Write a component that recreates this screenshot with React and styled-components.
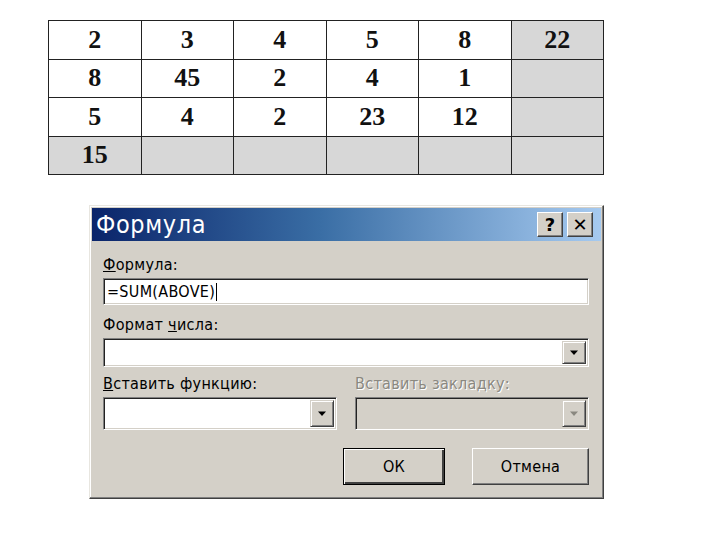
import React from "react";
import styled, { createGlobalStyle } from "styled-components";

const Global = createGlobalStyle`
  html, body { margin: 0; padding: 0; background: #fff; }
  body { width: 720px; height: 540px; overflow: hidden; }
`;

const Page = styled.div`
  display: flex;
  flex-direction: column;
  padding: 20px 0 0 48px;
`;

const Table = styled.table`
  border-collapse: collapse;
  width: 556px;
  table-layout: fixed;
  font-family: "Liberation Serif", serif;
  font-weight: bold;
  font-size: 26px;
  color: #111;
`;

const Cell = styled.td`
  border: 1px solid #222;
  height: 37.5px;
  padding: 0;
  text-align: center;
  vertical-align: middle;
  background: ${(p) => (p.$grey ? "#d7d7d7" : "#fff")};
  line-height: 1;
`;

const Dialog = styled.div`
  margin: 30px 0 0 41px;
  width: 515px;
  height: 294px;
  box-sizing: border-box;
  background: #d4d0c8;
  border: 1px solid #404040;
  border-top-color: #e8e6e0;
  border-left-color: #e8e6e0;
  box-shadow: inset -1px -1px 0 #808080, inset 1px 1px 0 #fff;
  padding: 2px;
  display: flex;
  flex-direction: column;
  font-family: "DejaVu Sans Condensed", "DejaVu Sans", sans-serif;
`;

const TitleBar = styled.div`
  height: 33px;
  background: linear-gradient(90deg, #0a246a 0%, #3a6ea5 45%, #a6caf0 100%);
  display: flex;
  align-items: center;
  padding: 0 8px 0 4px;
`;

const Title = styled.div`
  flex: 1;
  color: #fff;
  font-size: 25px;
  letter-spacing: 0.6px;
`;

const CapButton = styled.div`
  width: 26px;
  height: 25px;
  margin-left: 4px;
  box-sizing: border-box;
  background: #d4d0c8;
  border: 1px solid;
  border-color: #fff #404040 #404040 #fff;
  box-shadow: inset -1px -1px 0 #808080;
  display: flex;
  align-items: center;
  justify-content: center;
  font-family: "DejaVu Sans", sans-serif;
  font-weight: bold;
  font-size: 18px;
  color: #000;
`;

const Body = styled.div`
  flex: 1;
  display: flex;
  flex-direction: column;
  padding: 15px 12px 0 11px;
`;

const Label = styled.div`
  font-size: 16px;
  letter-spacing: 0.3px;
  color: ${(p) => (p.$disabled ? "#8a8880" : "#000")};
  height: 18px;
  line-height: 18px;
  margin-top: ${(p) => p.$mt || 0}px;
  text-shadow: ${(p) => (p.$disabled ? "1px 1px 0 #fff" : "none")};
  u { text-decoration: underline; }
`;

const Field = styled.div`
  height: ${(p) => p.$h || 27}px;
  box-sizing: border-box;
  margin-top: 4px;
  background: ${(p) => (p.$disabled ? "#d4d0c8" : "#fff")};
  border: 1px solid;
  border-color: #808080 #fff #fff #808080;
  box-shadow: inset 1px 1px 0 #222, inset -1px -1px 0 #d4d0c8;
  display: flex;
  align-items: stretch;
  font-size: 16px;
  letter-spacing: 0.3px;
  color: #000;
  padding: 2px;
`;

const FieldText = styled.div`
  flex: 1;
  display: flex;
  align-items: center;
  padding-left: 1px;
`;

const Caret = styled.span`
  display: inline-block;
  width: 1px;
  height: 18px;
  background: #000;
  margin-left: 1px;
`;

const DropBtn = styled.div`
  width: 24px;
  box-sizing: border-box;
  background: #d4d0c8;
  border: 1px solid;
  border-color: #d4d0c8 #404040 #404040 #d4d0c8;
  box-shadow: inset 1px 1px 0 #fff, inset -1px -1px 0 #808080;
  display: flex;
  align-items: center;
  justify-content: center;
`;

const Row = styled.div`
  display: flex;
  gap: 18px;
`;

const Col = styled.div`
  flex: ${(p) => p.$flex || 1};
  display: flex;
  flex-direction: column;
`;

const ButtonRow = styled.div`
  display: flex;
  justify-content: flex-end;
  gap: 27px;
  margin-top: 18px;
`;

const Button = styled.div`
  width: ${(p) => p.$w}px;
  height: 37px;
  box-sizing: border-box;
  background: #d4d0c8;
  border: 1px solid;
  border-color: ${(p) => (p.$default ? "#000" : "#fff #404040 #404040 #fff")};
  box-shadow: ${(p) =>
    p.$default
      ? "inset 1px 1px 0 #fff, inset -2px -2px 0 #404040"
      : "inset -1px -1px 0 #808080"};
  display: flex;
  align-items: center;
  justify-content: center;
  font-size: 16px;
  letter-spacing: 0.3px;
  color: #000;
`;

function Arrow({ disabled }) {
  return (
    <svg width="10" height="6" viewBox="0 0 10 6">
      <path d="M1 0.5 H9 L5 5 Z" fill={disabled ? "#8a8880" : "#000"} />
    </svg>
  );
}

const rows = [
  [["2"], ["3"], ["4"], ["5"], ["8"], ["22", true]],
  [["8"], ["45"], ["2"], ["4"], ["1"], ["", true]],
  [["5"], ["4"], ["2"], ["23"], ["12"], ["", true]],
  [["15", true], ["", true], ["", true], ["", true], ["", true], ["", true]],
];

export default function App() {
  return (
    <>
      <Global />
      <Page>
        <Table>
          <tbody>
            {rows.map((r, i) => (
              <tr key={i}>
                {r.map(([v, g], j) => (
                  <Cell key={j} $grey={g}>
                    {v}
                  </Cell>
                ))}
              </tr>
            ))}
          </tbody>
        </Table>

        <Dialog>
          <TitleBar>
            <Title>Формула</Title>
            <CapButton>?</CapButton>
            <CapButton>✕</CapButton>
          </TitleBar>
          <Body>
            <Label>
              <u>Ф</u>ормула:
            </Label>
            <Field>
              <FieldText>
                =SUM(ABOVE)
                <Caret />
              </FieldText>
            </Field>
            <Label $mt={11}>
              Формат <u>ч</u>исла:
            </Label>
            <Field $h={29}>
              <FieldText />
              <DropBtn>
                <Arrow />
              </DropBtn>
            </Field>
            <Row>
              <Col>
                <Label $mt={8}>
                  <u>В</u>ставить функцию:
                </Label>
                <Field $h={33}>
                  <FieldText />
                  <DropBtn>
                    <Arrow />
                  </DropBtn>
                </Field>
              </Col>
              <Col>
                <Label $mt={8} $disabled>
                  Вставить закладку:
                </Label>
                <Field $h={33} $disabled>
                  <FieldText />
                  <DropBtn>
                    <Arrow disabled />
                  </DropBtn>
                </Field>
              </Col>
            </Row>
            <ButtonRow>
              <Button $w={102} $default>
                ОК
              </Button>
              <Button $w={117}>Отмена</Button>
            </ButtonRow>
          </Body>
        </Dialog>
      </Page>
    </>
  );
}
